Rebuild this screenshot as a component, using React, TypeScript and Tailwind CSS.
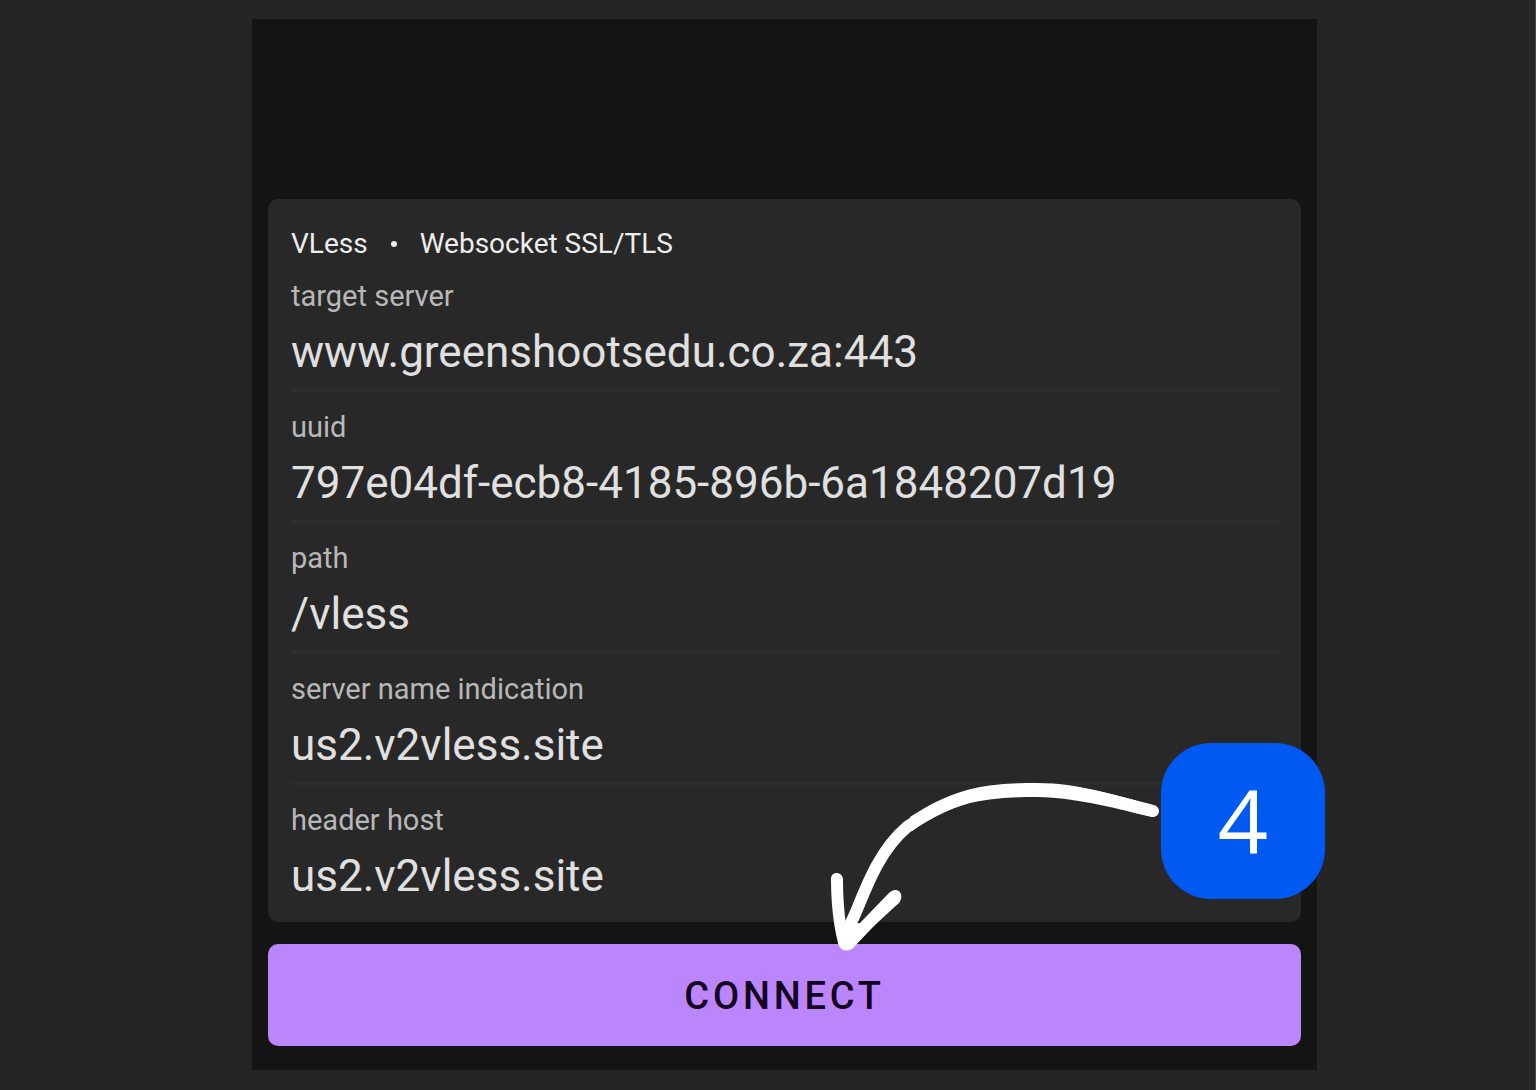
const fields = [
  { id: "target", label: "target server", value: "www.greenshootsedu.co.za:443" },
  { id: "uuid", label: "uuid", value: "797e04df-ecb8-4185-896b-6a1848207d19" },
  { id: "path", label: "path", value: "/vless" },
  { id: "sni", label: "server name indication", value: "us2.v2vless.site" },
  { id: "host", label: "header host", value: "us2.v2vless.site" },
];

function Field({ id, label, value }: { id: string; label: string; value: string }) {
  return (
    <div className="flex flex-col border-b-3 border-[#2d2d2d] pt-4 last:border-transparent">
      <label htmlFor={id} className="pt-px text-[29px] leading-9 text-[#b8b8b8]">
        {label}
      </label>
      <input
        id={id}
        type="text"
        defaultValue={value}
        spellCheck={false}
        className="h-[75px] w-full bg-transparent p-0 text-[44px] text-[#e0e0e0] outline-none"
      />
    </div>
  );
}

function StepPointer() {
  return (
    <div className="pointer-events-none absolute -right-2 bottom-[118px] flex items-start">
      <svg
        width="334"
        height="172"
        viewBox="827 780 334 172"
        fill="none"
        stroke="#fff"
        strokeLinecap="round"
        strokeLinejoin="round"
        aria-hidden="true"
      >
        <path
          strokeWidth="12"
          d="M1153 811 C1120 803 1082 790 1036 790 C1012 790 999 791 980 794 C953 800 930 811 907 827 C882 848 869 880 858 907 C855 915 851 923 846 933"
        />
        <path stroke="none" fill="#fff" d="M1156 806 C1120 797 1082 783 1036 783 C1012 783 999 784 980 787 C953 792 930 804 910 817 L912 831 C932 817 955 805 980 801 C999 798 1012 797 1036 797 C1082 798 1120 810 1153 817 Z" />
        <path stroke="none" fill="#fff" d="M831 879 C831 871 842 871 843 879 C843 895 844 911 846 924 L860 923 L888 894 C896 885 906 893 899 903 C889 912 880 920 872 928 L855 946 C850 953 840 952 838 943 C833 923 831 900 831 879 Z" />
      </svg>
      <div className="-mt-[37px] flex h-39 w-[164px] items-center justify-center rounded-[50px] bg-[#005af2] pb-[2px] font-['Open_Sans',sans-serif] text-[88px] leading-none text-white">
        4
      </div>
    </div>
  );
}

export default function App() {
  return (
    <main className="min-h-screen border-r border-[#484848] bg-[#252525] pt-[19px] pr-[218px] pb-5 pl-[252px] font-[Roboto,sans-serif]">
      <form
        className="relative bg-[#141414] px-4 pt-45 pb-6"
        onSubmit={(event) => event.preventDefault()}
      >
        <section className="rounded-[10px] bg-[#282828] px-[23px] pt-7 pb-[6px]">
          <h1 className="flex items-center gap-[23px] text-[28px] leading-[34px] text-[#ededed]">
            <span>VLess</span>
            <span className="size-[6px] rounded-full bg-[#ededed]" />
            <span>Websocket SSL/TLS</span>
          </h1>
          <div>
            {fields.map((field) => (
              <Field key={field.id} {...field} />
            ))}
          </div>
        </section>
        <button
          type="submit"
          className="mt-[22px] h-[102px] w-full rounded-[10px] bg-[#bb86fc] pt-[2px] text-[38px] font-medium tracking-widest text-[#13001f]"
        >
          CONNECT
        </button>
        <StepPointer />
      </form>
    </main>
  );
}
